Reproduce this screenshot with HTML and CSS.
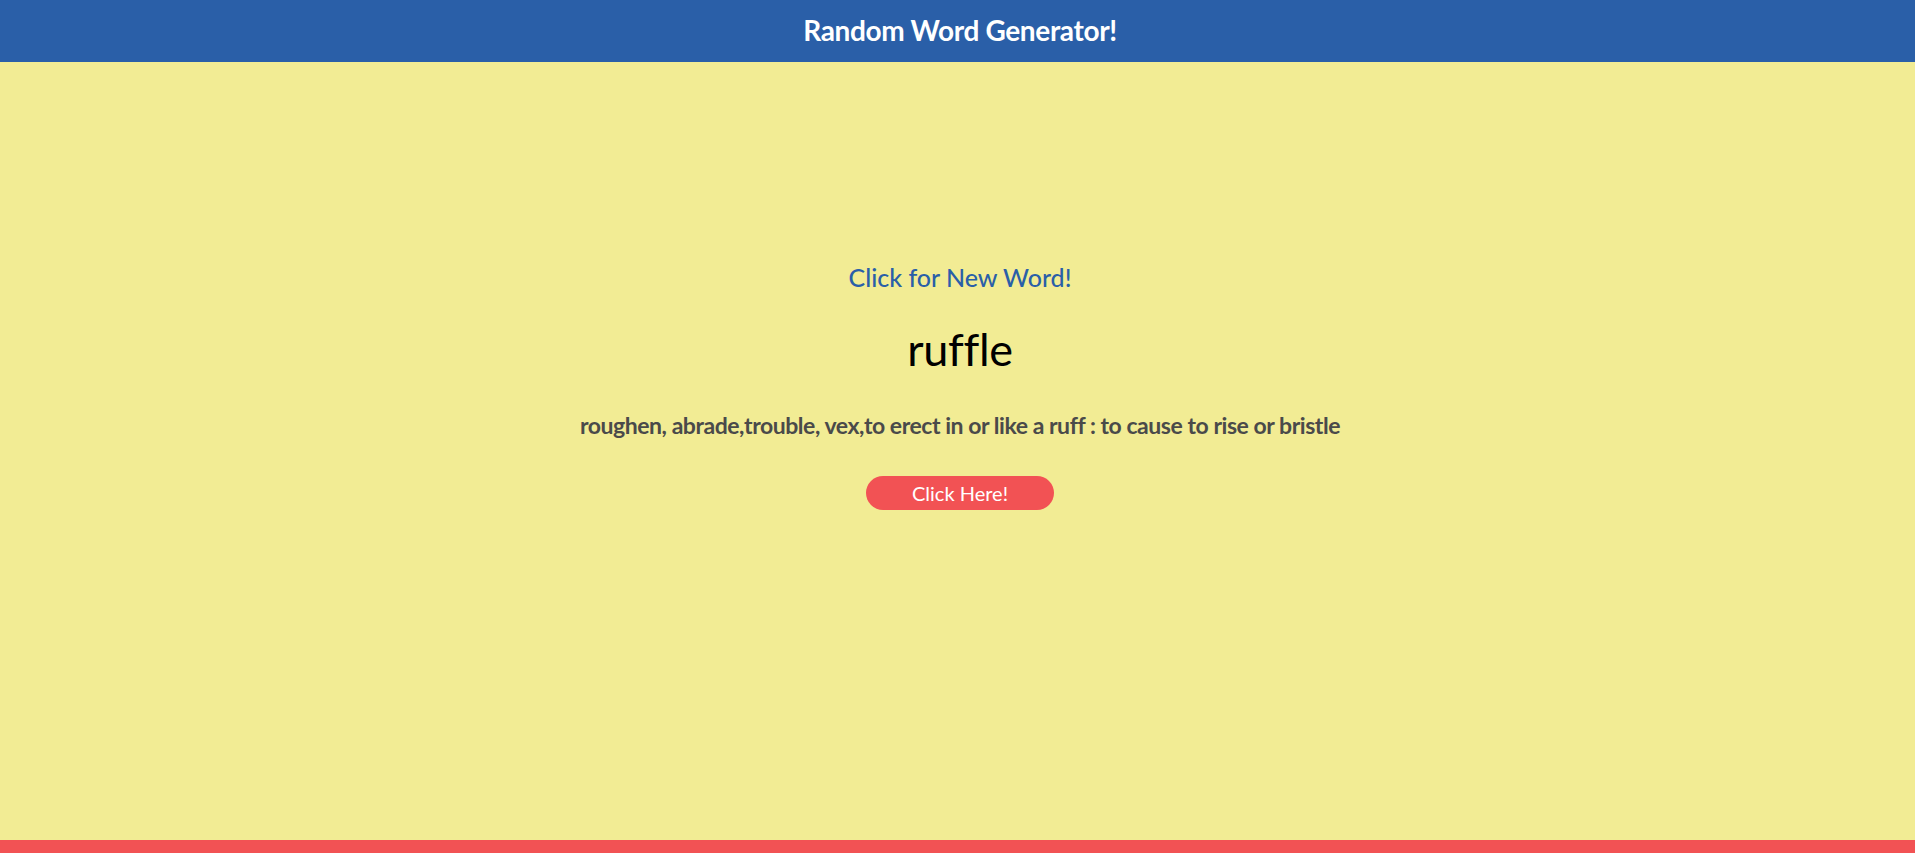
FILE: index.html
```html
<!DOCTYPE html>
<html lang="en">
<head>
<meta charset="utf-8">
<title>Random Word Generator!</title>
<link rel="stylesheet" href="styles.css">
</head>
<body>
<header class="topbar">
  <h1 class="title">Random Word Generator!</h1>
</header>
<main class="content">
  <p class="prompt">Click for New Word!</p>
  <h2 class="word">ruffle</h2>
  <p class="definition">roughen, abrade,trouble, vex,to erect in or like a ruff : to cause to rise or bristle</p>
  <button class="btn" type="button">Click Here!</button>
</main>
<footer class="bottombar"></footer>
</body>
</html>
```

FILE: styles.css
```css
* { box-sizing: border-box; }
html, body { height: 100%; }
body {
  margin: 0;
  font-family: Lato, "Open Sans", sans-serif;
  background: #f2ec94;
  display: flex;
  flex-direction: column;
}
.topbar {
  height: 62px;
  padding-left: 5px;
  background: #2a5fa8;
  display: flex;
  align-items: center;
  justify-content: center;
}
.title {
  margin: 0;
  color: #fff;
  font-size: 28px;
  font-weight: 700;
  letter-spacing: -0.35px;
  line-height: 1.2;
}
.content {
  flex: 1;
  display: flex;
  flex-direction: column;
  align-items: center;
  padding-top: 200px;
  padding-left: 5px;
}
.prompt {
  margin: 0;
  color: #2a5fa8;
  font-size: 25px;
  font-weight: 500;
  line-height: 1.2;
}
.word {
  margin: 30px 0 0;
  color: #000;
  font-size: 45px;
  font-weight: 400;
  letter-spacing: -0.3px;
  line-height: 1.2;
}
.definition {
  margin: 36px 0 0;
  color: #4a4a4a;
  font-size: 23px;
  font-weight: 700;
  letter-spacing: -0.45px;
  line-height: 1.2;
}
.btn {
  margin-top: 36px;
  width: 188px;
  height: 34px;
  border: none;
  border-radius: 17px;
  background: #f25254;
  color: #fff;
  font-family: Lato, sans-serif;
  font-size: 20px;
  line-height: 34px;
  padding: 0;
}
.bottombar {
  height: 13px;
  background: #f25254;
}
```
